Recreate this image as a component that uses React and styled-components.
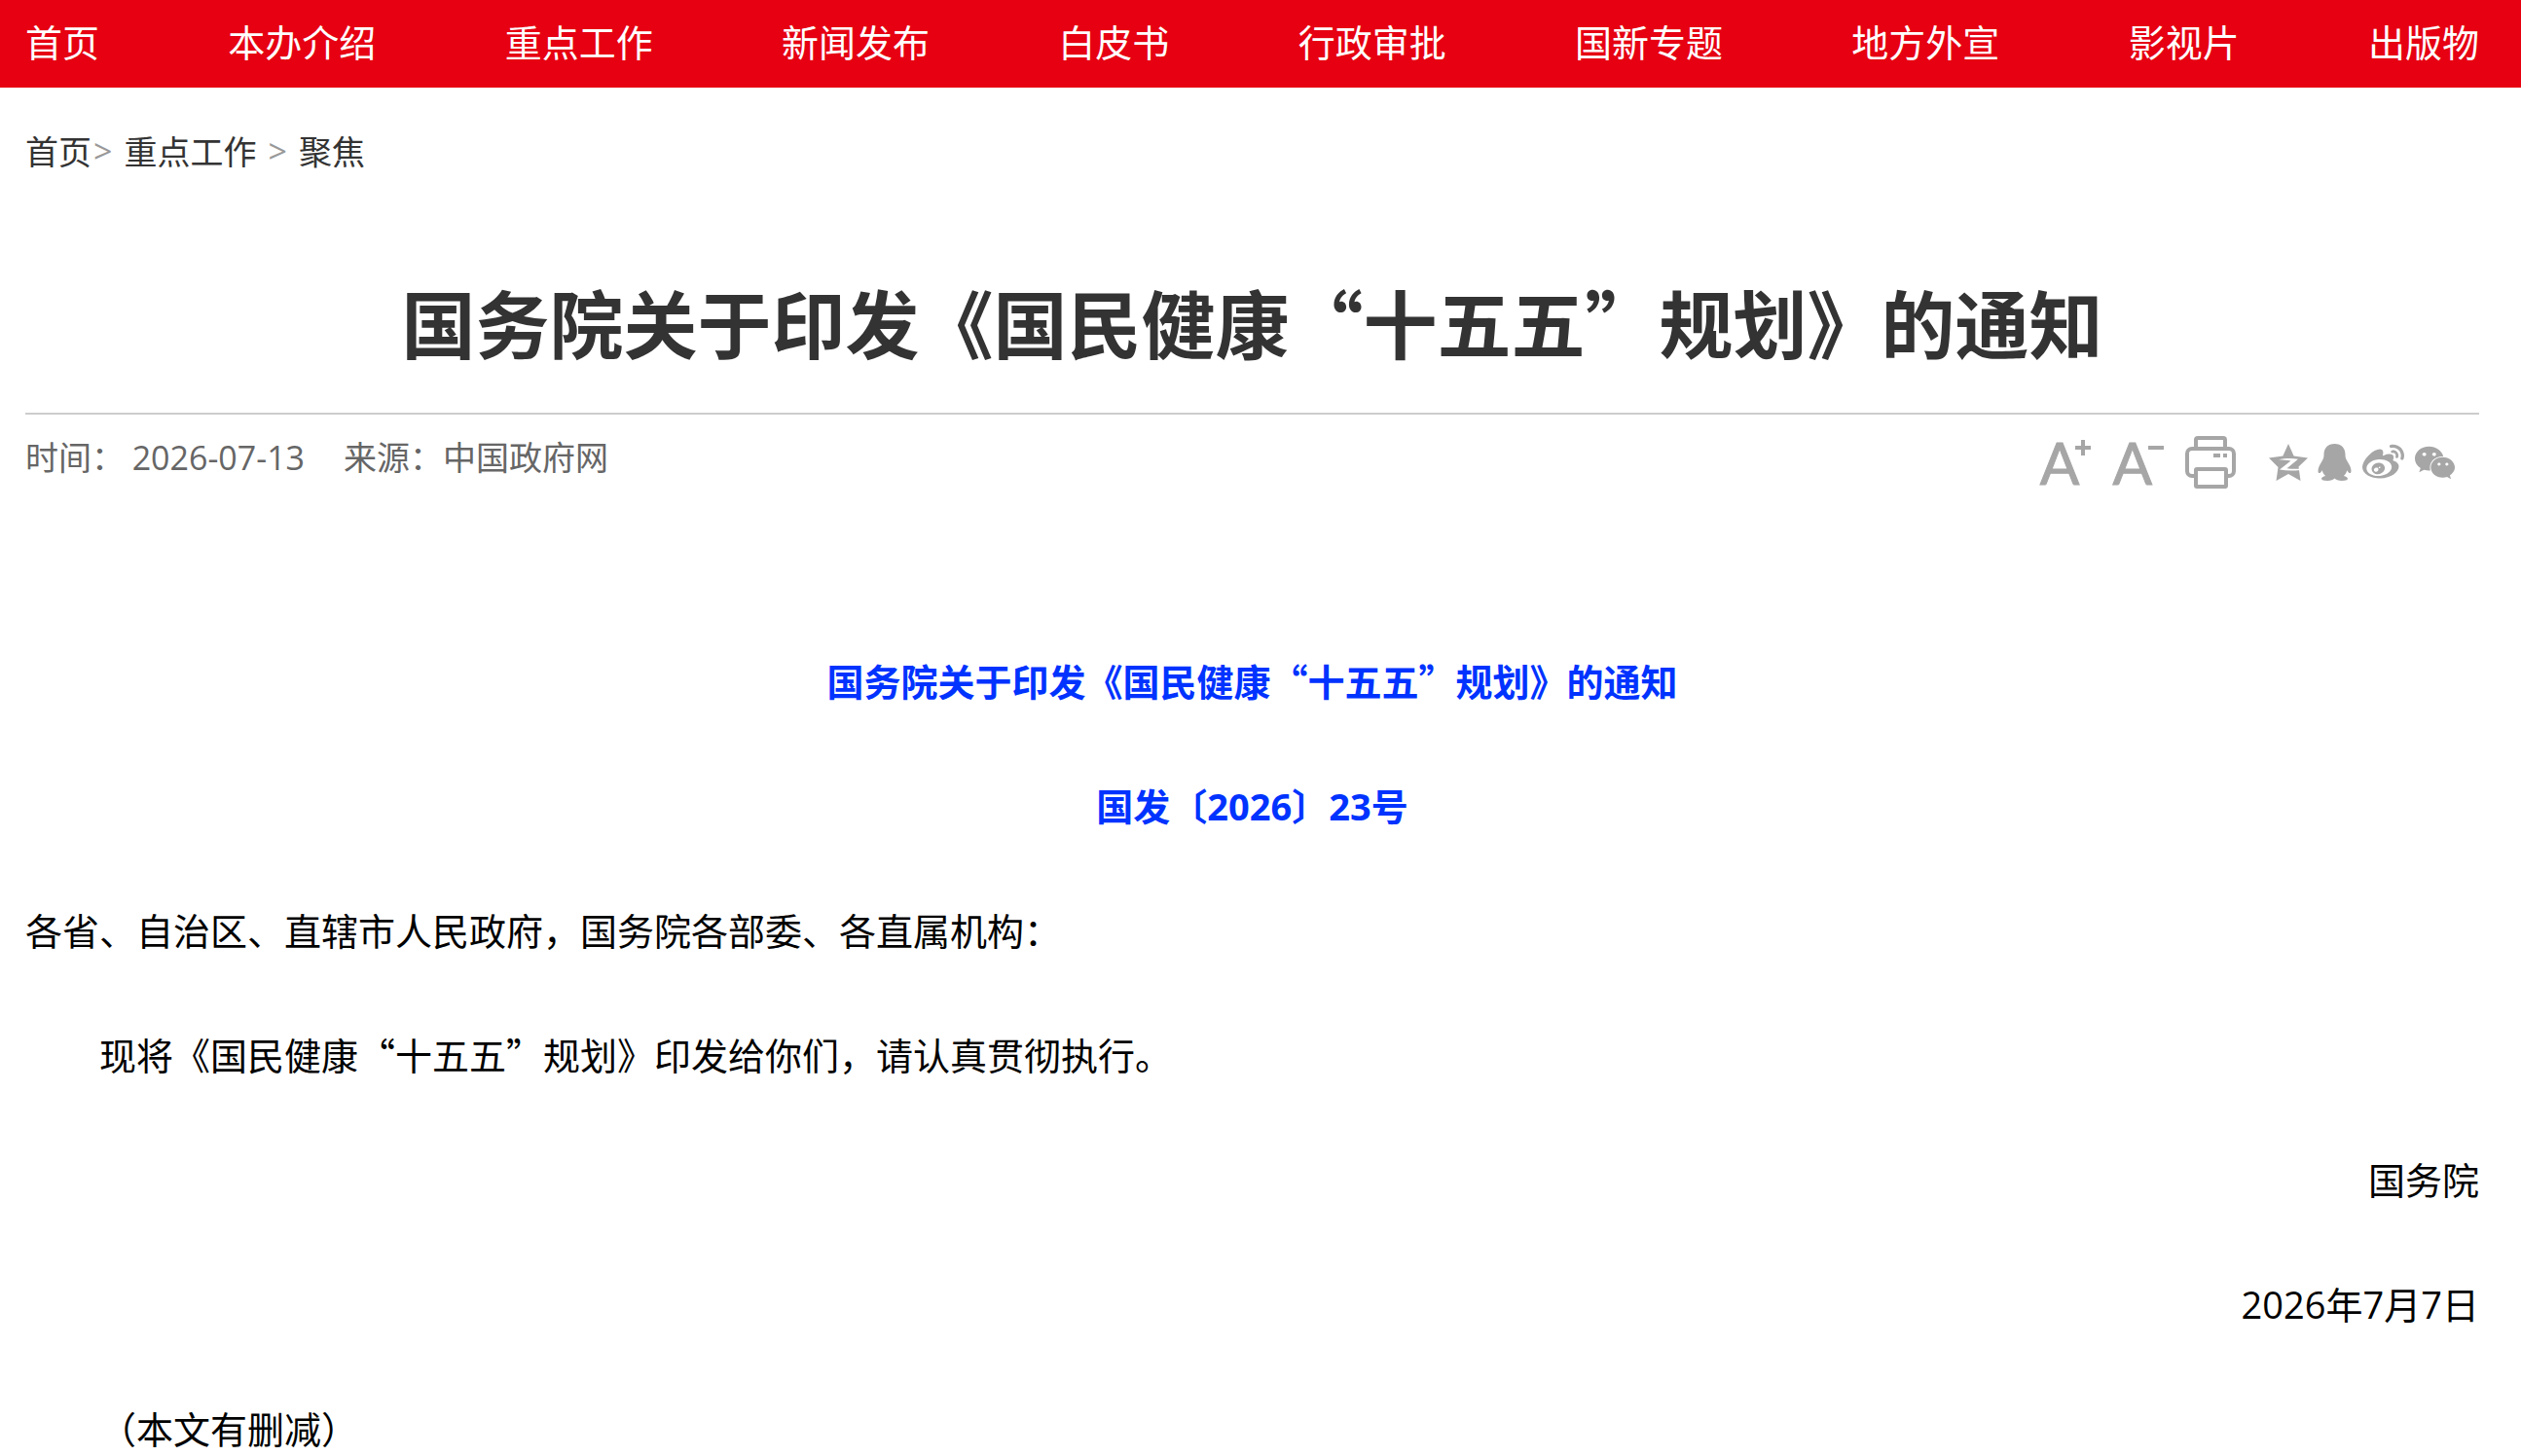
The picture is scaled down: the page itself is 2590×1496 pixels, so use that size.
import styled, { createGlobalStyle } from "styled-components";
import { FaWeibo, FaWeixin } from "react-icons/fa";

const navItems = [
  "首页",
  "本办介绍",
  "重点工作",
  "新闻发布",
  "白皮书",
  "行政审批",
  "国新专题",
  "地方外宣",
  "影视片",
  "出版物",
];

export default function App() {
  return (
    <>
      <GlobalStyle />
      <NavBar>
        {navItems.map((item) => (
          <NavLink key={item} href="#">
            {item}
          </NavLink>
        ))}
      </NavBar>
      <Page>
        <Breadcrumb aria-label="当前位置">
          <a href="#">首页</a>
          <Arrow>&gt;</Arrow>
          <a href="#">重点工作</a>
          <Arrow $spaced>&gt;</Arrow>
          <a href="#">聚焦</a>
        </Breadcrumb>
        <Title>国务院关于印发《国民健康“十五五”规划》的通知</Title>
        <MetaRow>
          <MetaText>
            <span>
              时间： <Latin>2026-07-13</Latin>
            </span>
            <span>来源：中国政府网</span>
          </MetaText>
          <Tools>
            <FontButton aria-label="放大字体">
              A
              <SignIcon viewBox="0 0 16 18">
                <path d="M0 9h16M8 1v16" />
              </SignIcon>
            </FontButton>
            <FontButton aria-label="缩小字体">
              A
              <SignIcon viewBox="0 0 16 18">
                <path d="M0 9h16" />
              </SignIcon>
            </FontButton>
            <ToolButton aria-label="打印">
              <PrintIcon />
            </ToolButton>
            <ShareGroup>
              <ShareLink href="#" aria-label="QQ空间">
                <QzoneIcon />
              </ShareLink>
              <ShareLink href="#" aria-label="QQ">
                <QqIcon />
              </ShareLink>
              <ShareLink href="#" aria-label="微博">
                <FaWeibo size={43} />
              </ShareLink>
              <ShareLink href="#" aria-label="微信">
                <FaWeixin size={43} />
              </ShareLink>
            </ShareGroup>
          </Tools>
        </MetaRow>
        <Article>
          <Heading>国务院关于印发《国民健康“十五五”规划》的通知</Heading>
          <Heading>
            国发〔<Latin>2026</Latin>〕<Latin>23</Latin>号
          </Heading>
          <Paragraph>
            各省、自治区、直辖市人民政府，国务院各部委、各直属机构：
          </Paragraph>
          <Paragraph $indent>
            现将《国民健康“十五五”规划》印发给你们，请认真贯彻执行。
          </Paragraph>
          <Paragraph $align="right">国务院</Paragraph>
          <Paragraph $align="right">
            <Latin>2026</Latin>年<Latin>7</Latin>月<Latin>7</Latin>日
          </Paragraph>
          <Paragraph $indent>（本文有删减）</Paragraph>
        </Article>
      </Page>
    </>
  );
}

function PrintIcon() {
  return (
    <svg width="52" height="54" viewBox="0 0 52 54" fill="none" stroke="currentColor" strokeWidth="4">
      <path d="M11 13V4a2 2 0 0 1 2-2h26a2 2 0 0 1 2 2v9" />
      <path d="M9 41H7a5 5 0 0 1-5-5V18a5 5 0 0 1 5-5h38a5 5 0 0 1 5 5v18a5 5 0 0 1-5 5h-2" />
      <rect x="11" y="34" width="31" height="18" rx="1" />
      <path d="M29 20h7M39 20h4" />
    </svg>
  );
}

function QzoneIcon() {
  return (
    <svg width="40" height="38" viewBox="0 0 40 38">
      <path
        fill="currentColor"
        d="M20 0l5.600 12.600L40 14.500 30.500 23.500 32.500 38 20 31 7.500 38 9.500 24 0 14.500l14.400-1.900z"
      />
      <path
        fill="#fff"
        d="M10 16.300c6-1.600 13.500-1.700 20-.6L18.500 25.200c5 .6 9.500.7 14.500.2l-.5 1.500c-7 1-14 1-21.500-.3l11.500-9.200c-4-.6-8-.8-12.500-1.100z"
      />
    </svg>
  );
}

function QqIcon() {
  return (
    <svg width="36" height="38" viewBox="0 0 36 38">
      <path
        fill="currentColor"
        d="M17.500 0C10.500 0 6.500 4.500 6.500 11c0 2.500-.3 4-1.500 6C3 20.500.5 24 .5 27.500c0 1.500.3 2.600 1 2.600 1.200 0 2.500-1.400 3.300-2.900.5 2.300 1.600 4.200 3.300 5.700-2.500.6-4.100 1.600-4.100 2.900C4 37.300 6.500 38 10 38c3.600 0 6.200-1 7.500-2.500C18.800 37 21.400 38 25 38c3.500 0 6-.7 6-2.200 0-1.300-1.600-2.300-4.100-2.900 1.700-1.500 2.800-3.400 3.300-5.700.8 1.500 2.100 2.900 3.300 2.900.7 0 1-1.100 1-2.600 0-3.500-2.500-7-4.500-10.500-1.200-2-1.500-3.500-1.500-6 0-6.500-4-11-11-11z"
      />
    </svg>
  );
}

const GlobalStyle = createGlobalStyle`
  body {
    margin: 0;
    background: #fff;
    color: #000;
    font-family: "Noto Sans CJK SC", sans-serif;
  }

  a {
    color: inherit;
    text-decoration: none;
  }
`;

const NavBar = styled.nav`
  display: flex;
  justify-content: space-between;
  align-items: center;
  padding: 17px 43px 23px 26px;
  background: #e60012;
`;

const NavLink = styled.a`
  color: #fff;
  font-size: 38px;
  line-height: 50px;
  white-space: nowrap;
`;

const Page = styled.main`
  padding: 40px 43px 0 26px;
`;

const Breadcrumb = styled.nav`
  display: flex;
  font-size: 34px;
  line-height: 50px;
  color: #333;
`;

const Arrow = styled.span`
  margin: 0 12px 0 ${({ $spaced }) => ($spaced ? "12px" : "2px")};
  color: #999;
  font-family: "Open Sans", sans-serif;
`;

const Title = styled.h1`
  margin: 100px 0 44px;
  color: #333;
  font-size: 76px;
  line-height: 100px;
  font-weight: 700;
  text-align: center;
`;

const MetaRow = styled.div`
  display: flex;
  justify-content: space-between;
  align-items: flex-start;
  padding: 18px 24px 0 0;
  border-top: 2px solid #ccc;
`;

const MetaText = styled.div`
  display: flex;
  gap: 40px;
  color: #666;
  font-size: 34px;
  line-height: 50px;
`;

// 数字使用西文字体
const Latin = styled.span`
  font-family: "Open Sans", sans-serif;
  line-height: 1;
`;

const Tools = styled.div`
  display: flex;
  align-items: center;
  height: 62px;
  gap: 22px;
  color: #a6a6a6;
`;

const ToolButton = styled.button`
  display: flex;
  padding: 0;
  border: 0;
  background: none;
  color: inherit;
  cursor: pointer;
`;

const FontButton = styled(ToolButton)`
  align-items: flex-start;
  font-family: Lato, sans-serif;
  font-size: 60px;
  line-height: 56px;
  -webkit-text-stroke: 1px currentColor;
`;

const SignIcon = styled.svg`
  width: 16px;
  height: 18px;
  margin: 4px 0 0 -4px;
  fill: none;
  stroke: currentColor;
  stroke-width: 4;
`;

const ShareGroup = styled.div`
  display: flex;
  align-items: center;
  gap: 10px;
  margin-left: 12px;
`;

const ShareLink = styled.a`
  display: flex;
`;

const Article = styled.article`
  display: flex;
  flex-direction: column;
  gap: 78px;
  padding-top: 168px;
`;

const Paragraph = styled.p`
  margin: 0;
  font-size: 38px;
  line-height: 50px;
  text-align: ${({ $align }) => $align || "left"};
  text-indent: ${({ $indent }) => ($indent ? "2em" : "0")};
`;

const Heading = styled.h2`
  margin: 0;
  color: #0033ff;
  font-size: 38px;
  line-height: 50px;
  font-weight: 700;
  text-align: center;
`;
